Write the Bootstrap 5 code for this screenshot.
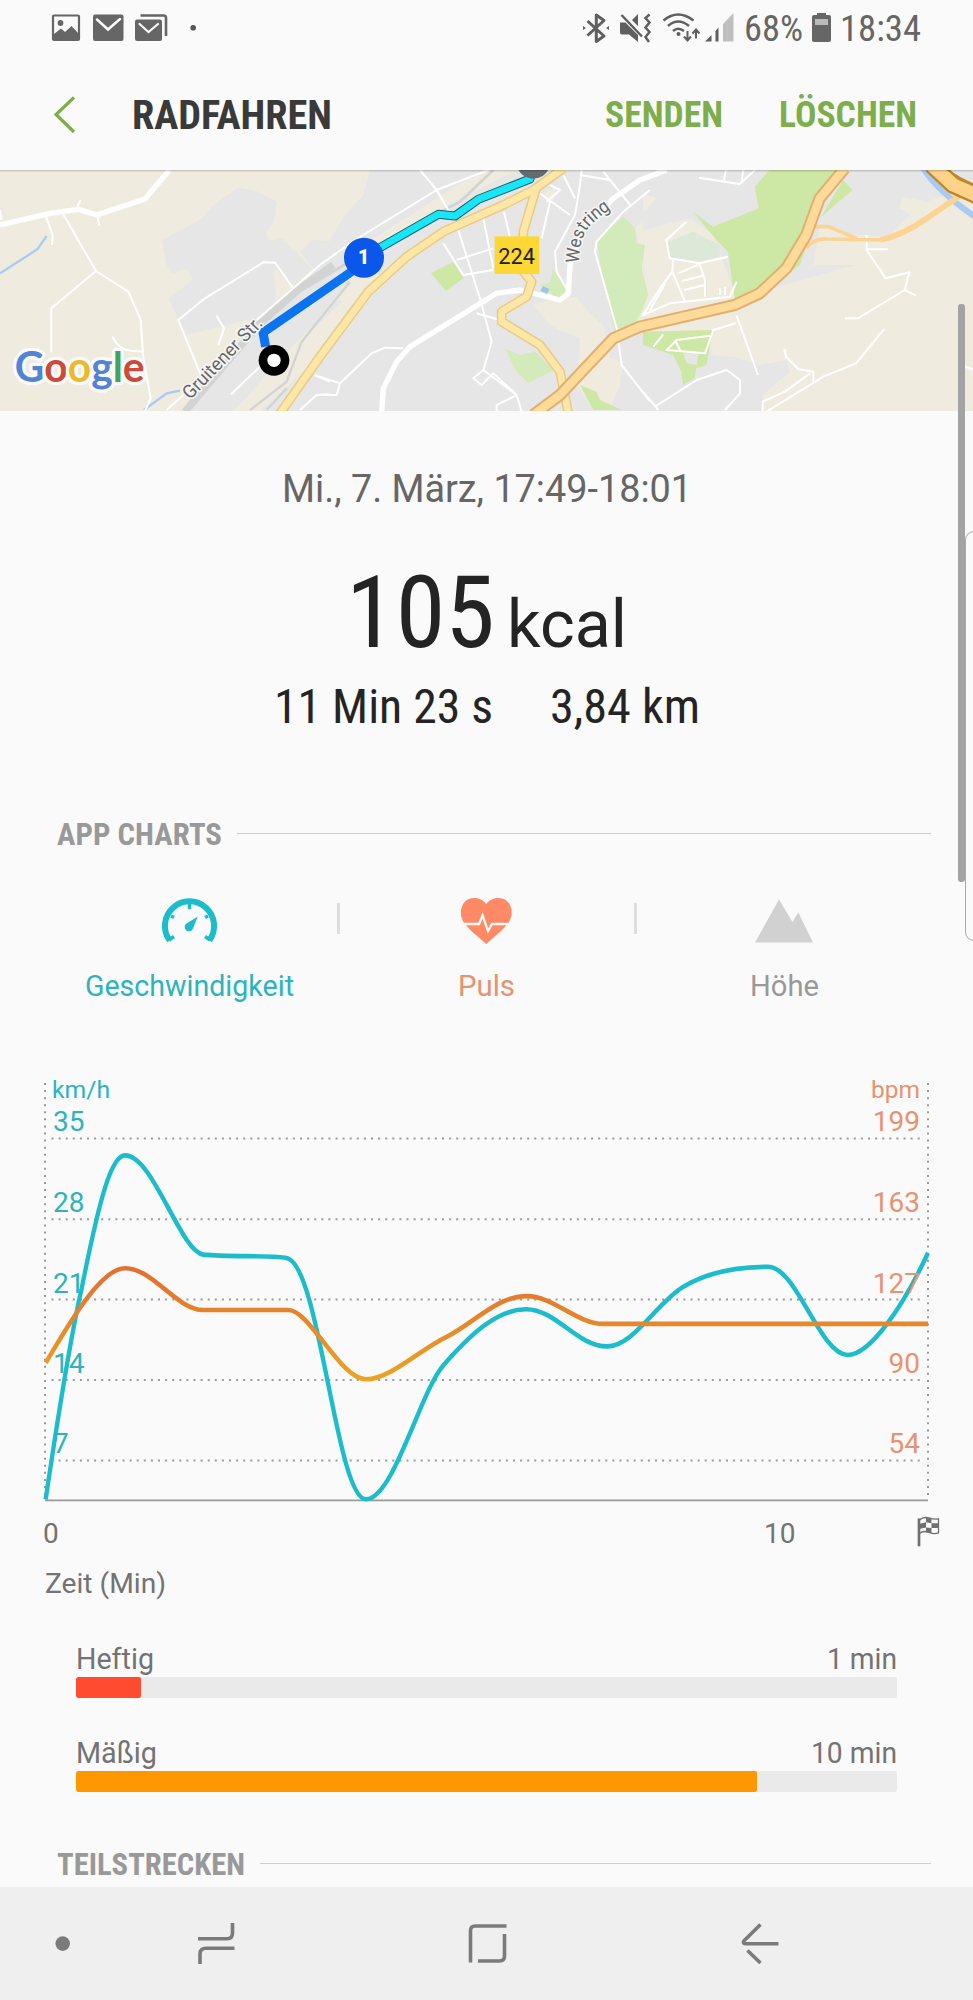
<!doctype html>
<html lang="de">
    <head>
        <meta charset="UTF-8" />
        <meta name="viewport" content="width=device-width, initial-scale=1.0" />
        <title>Radfahren</title>
        <link
            href="https://cdn.jsdelivr.net/npm/bootstrap@5.3.0/dist/css/bootstrap.min.css"
            rel="stylesheet"
        />
        <style>
            body {
                background: #fafafa;
                color: #242424;
                font-family: Roboto, sans-serif;
                height: 2000px;
                overflow: hidden;
            }
            svg {
                display: block;
                flex-shrink: 0;
            }
            svg text {
                font-family: Roboto, sans-serif;
            }
            svg .logo-text {
                font-family: Lato, sans-serif;
                font-weight: 700;
            }
            .cond {
                font-family: "Roboto Condensed", Roboto, sans-serif;
                font-stretch: condensed;
            }
            .fit {
                display: block;
                white-space: nowrap;
                flex-shrink: 0;
            }
            .fit > span {
                display: inline-block;
                transform-origin: 0 50%;
            }
            .status-bar {
                height: 58px;
                padding-right: 52px;
                font-size: 36px;
                line-height: 58px;
                color: #666;
            }
            .app-bar {
                height: 112px;
                padding: 2px 56px 0 54px;
                line-height: 60px;
            }
            .app-title {
                font-size: 40.7px;
                color: #3a3a3a;
                margin-left: 56px;
            }
            .app-action {
                font-size: 36px;
                color: #7dae4b;
            }
            .app-actions {
                gap: 56px;
            }
            .summary {
                padding-top: 52.5px;
            }
            .date-line {
                font-size: 38.5px;
                line-height: 50px;
                color: #666;
            }
            .calories {
                margin-top: 49px;
                height: 100px;
                line-height: 100px;
                font-size: 100px;
                gap: 12px;
            }
            .calories .unit {
                font-size: 67px;
            }
            .totals {
                margin-top: 19.3px;
                font-size: 47.4px;
                line-height: 50px;
                gap: 57px;
            }
            .section-head {
                margin-top: 85.6px;
                padding: 0 42.5px 0 57px;
                gap: 15px;
                font-size: 31px;
                line-height: 36px;
                color: #999;
            }
            .section-head.splits {
                margin-top: 54.9px;
            }
            .rule {
                height: 1.5px;
                background: #cfcfcf;
                margin-bottom: 4px;
            }
            .metrics {
                margin-top: 43.6px;
                padding: 0 41.5px 0 42px;
                font-size: 29px;
                line-height: 36px;
            }
            .metric {
                height: 107px;
            }
            .metric svg {
                margin-bottom: 23px;
            }
            .divider {
                width: 3px;
                height: 31px;
                margin-top: 6px;
                background: #dedede;
            }
            .speed {
                color: #2eb3bd;
            }
            .pulse {
                color: #e79270;
            }
            .height {
                color: #999;
            }
            .chart {
                margin-top: 56px;
            }
            .zones {
                margin-top: 36px;
                padding: 0 76px 0 75.5px;
                font-size: 29px;
                line-height: 36px;
                color: #737373;
            }
            .zone + .zone {
                margin-top: 37.5px;
            }
            .zone .progress {
                --bs-progress-height: 21px;
                --bs-progress-bg: #eaeaea;
                --bs-progress-border-radius: 2px;
            }
            .zone .progress-bar {
                border-radius: 2px;
            }
            .bg-hard {
                background: #ff4c30;
            }
            .bg-moderate {
                background: #ff9800;
            }
            .nav-keys {
                margin-top: 3.2px;
                height: 114px;
                background: #efefef;
            }
            .scroll-thumb {
                position: absolute;
                left: 958px;
                top: 304px;
                width: 7px;
                height: 578px;
                border-radius: 3px;
                background: #a3a3a3;
            }
            .edge-handle {
                position: absolute;
                left: 965px;
                top: 531px;
                width: 20px;
                height: 410px;
                border: 1px solid #a8a8a8;
                border-radius: 9px;
            }
        </style>
    </head>
    <body class="position-relative">
        <!-- Status bar -->
        <div class="status-bar d-flex justify-content-between">
            <svg width="210" height="58" viewBox="0 0 210 58">
                <rect x="53" y="15.500" width="26" height="24.500" rx="1" fill="none" stroke="#666" stroke-width="2.200" />
                <circle cx="60.500" cy="23" r="2.900" fill="#666" />
                <path d="M54 34 61 28.500 65 32 71.500 26 78 33V40H54Z" fill="#666" />
                <rect x="93" y="14.500" width="30.500" height="26.500" rx="2" fill="#666" />
                <path d="M97 19.500 108 29.500 120 19" fill="none" stroke="#fafafa" stroke-width="2.500" stroke-linecap="round" />
                <path d="M140.500 15.500H164Q166 15.500 166 18V36" fill="none" stroke="#666" stroke-width="2.600" />
                <rect x="135" y="19.500" width="27" height="21.500" rx="2" fill="#666" />
                <path d="M139.500 24 148.500 32 158 24" fill="none" stroke="#fafafa" stroke-width="2.200" stroke-linecap="round" />
                <circle cx="193.200" cy="27.700" r="2.800" fill="#555" />
            </svg>
            <div class="d-flex">
                <svg width="164" height="58" viewBox="580 0 164 58" fill="none" stroke="#5f5f5f" stroke-width="2.500">
                    <path d="M587.500 21 604 36 596.300 41.500V15L604 20.500 587.500 35.500" stroke-width="3" stroke-linejoin="round" />
                    <path d="M583 26 586 28 583 30ZM609 26 606 28 609 30Z" fill="#5f5f5f" stroke="none" />
                    <path d="M620 22.500H625.500L638 35V42L629 34.500H622Q620 34.500 620 32ZM638 14V26L632 20Z" fill="#5f5f5f" stroke="none" />
                    <path d="M621.500 15 642 36.500" />
                    <path d="M649.500 14.500 645.500 18 649.500 22.500 645.500 27.500 649.500 32 645.500 37 649 42" />
                    <path d="M663.500 20.500Q678 8.500 693.500 20.500M668 26Q678 17 689 26M673 31Q678 26.500 684 31" />
                    <circle cx="678.500" cy="34" r="2" fill="#5f5f5f" stroke="none" />
                    <path d="M687.500 31V40M684 36.500 687.500 40.500 691 36.500M696 38.500V30M692.500 33.500 696 29.500 699.500 33.500" stroke-width="2" />
                    <path d="M705 41.500 711.500 35V41.500ZM715.500 31 718.500 27.500V41.500H715.500Z" fill="#5f5f5f" stroke="none" />
                    <path d="M723 24 733.500 13V41.500H723Z" fill="#bfbfbf" stroke="none" />
                </svg>
                <span class="fit cond" data-width="59"><span>68%</span></span>
                <svg width="37" height="58" viewBox="803 0 37 58">
                    <path d="M812 17Q812 15 814 15H817V13H826V15H829Q831 15 831 17V40Q831 42 829 42H814Q812 42 812 40Z" fill="#666" />
                    <rect x="815" y="19" width="13" height="6" fill="#bbb" />
                </svg>
                <span class="fit cond" data-width="81"><span>18:34</span></span>
            </div>
        </div>

        <!-- App bar -->
        <header class="app-bar cond fw-bold d-flex align-items-center">
            <svg width="22" height="40" viewBox="54 94 22 40">
                <path d="M74 96.500 56 113.500 74 131" fill="none" stroke="#7dae4b" stroke-width="3.200" />
            </svg>
            <span class="app-title fit" data-width="200"><span>RADFAHREN</span></span>
            <div class="app-actions d-flex ms-auto">
                <span class="app-action fit" data-width="118"><span>SENDEN</span></span>
                <span class="app-action fit" data-width="138"><span>LÖSCHEN</span></span>
            </div>
        </header>

        <!-- Route map -->
        <svg width="973" height="241" viewBox="0 170 973 241" stroke-linejoin="round">
            <rect y="170" width="973" height="241" fill="#efebdf" />
            <g transform="translate(0 165) scale(.33333)">
                <!-- built-up areas -->
                <g fill="#e6e6e6">
                    <path d="M485 225 600 165 640 120 715 68 770 78 830 110 822 170 797 205 812 228 845 220 935 310 880 370 770 480 740 465 560 510 505 400 578 345 560 310 520 325 500 300ZM900 260 937 224 990 228V290L940 315Z" />
                    <path d="M1110 15 1090 90 1035 150 990 225 930 330 880 400 700 560 540 740 720 740 950 480 1040 400 1060 410 920 610 780 740H3000V15Z" />
                </g>
                <g fill="#efebdf">
                    <path d="M1100 235 1310 100 1370 60 1470 15H1550L1370 105 1110 265ZM1060 330 1140 305 1130 370 1060 415 1010 405ZM700 740 860 560 940 480 880 580 740 740Z" />
                    <path d="M1600 420 1660 400 1730 395 1765 440 1810 480 1830 580 1870 590 1860 660 1830 735 1770 720 1730 660 1740 520 1690 500 1650 480ZM1905 190 1929 170V450L1935 350 1915 240ZM1630 85 1670 65 1660 110Z" />
                    <path d="M1929 195 2070 160 2140 210 2210 400 2990 180V740H2289V690L2369 620 2359 585 2279 600 2199 575 2139 570 2119 500 1929 500 1900 430 1935 380Z" />
                    <path d="M2929 60 2990 90V300H2440L2460 185 2560 210 2670 212 2700 180 2730 150 2697 125 2710 95 2780 110Z" />
                    <path d="M1929 85 1970 100 1929 145ZM820 305 880 368 830 420Z" />
                </g>
                <!-- parks and water -->
                <g fill="#cde7a5">
                    <path d="M1293 325 1360 290 1390 340 1338 378ZM1740 660 1790 680 1800 705 1865 735H1780ZM2309 15H2530L2459 120 2400 300 2289 385 2204 400 2184 260 2154 230 2079 140 2139 185 2276 130 2264 65ZM2529 45 2557 75 2464 155Z" />
                    <path d="M1929 500 2139 495 2119 600 2089 610 2084 640 2049 660 2044 620 2019 570 1929 540ZM2050 565 2060 595 2090 600 2095 565Z" fill-rule="evenodd" />
                    <path d="M1515 552 1560 570 1605 560 1660 615 1585 655 1550 620ZM1790 225 1870 155 1905 190 1910 235 1935 240 1925 310 1945 390 1920 450 1900 480 1845 500 1810 350ZM1620 360 1650 350 1660 310 1705 380 1680 405Z" fill="#d3eaba" />
                    <path d="M2004 230 2079 200 2159 240V275L2089 290 2009 280Z" fill="#dce9d8" />
                </g>
                <path d="M0 325 112 253 140 213M432 735 500 685 540 677" fill="none" stroke="#a9cbf2" stroke-width="7" />
                <path d="M2769 10Q2820 85 2925 155" fill="none" stroke="#a9cbf2" stroke-width="18" />
                <path d="M1625 370 1645 380" stroke="#9dc5ea" stroke-width="16" />
                <!-- railway -->
                <g fill="none" stroke="#d2d3d3">
                    <path d="M555 740 775 480 900 370 1000 300" stroke-width="22" />
                    <path d="M880 390 1100 260 1380 110 1480 15" stroke-width="8" />
                    <path d="M750 735 860 650 905 530 1050 350M800 735 860 670" stroke-width="7" />
                </g>
                <!-- side streets -->
                <g fill="none" stroke="#fff" stroke-width="6">
                    <path d="M188 145 288 318 385 380 422 465 430 580 452 700 435 738M288 318 154 430V562M138 155 158 210 156 240M232 125 242 105M292 150 298 182M338 515Q355 555 395 557L428 560M600 625 535 465 615 400 790 292 825 293 880 370M650 452 672 490 655 540M693 688 780 605M500 735 550 690M945 630 990 650M900 735 950 690 990 688M0 135 4 165" />
                    <path d="M770 465 960 300 1060 228 1310 75 1465 15M1260 15 1310 75 1370 180 1440 400 1475 530 1450 615 1420 640 1445 660 1480 625 1550 690 1565 740M1330 235 1390 330 1480 315M1450 160 1480 310M1512 140 1540 260M1370 285 1480 250M960 635 1020 655 1010 690 960 690M1020 655 1115 565 1155 548 1210 550M1430 445 1500 465M1450 615 1550 690 1490 720V740M1620 85 1710 150M1650 60 1680 75 1640 110M1690 30 1725 100M1745 15 1740 60 1725 150M1650 110 1625 220M1740 30 1830 45M1725 150 1665 260 1670 320 1705 380M1950 75 1870 140 1790 230 1785 260 1850 490 1865 600 1950 710M1810 20 1890 120" />
                    <path d="M2059 170 1999 225 2009 280 2099 295 2184 275M2019 285 2017 320 2055 410 2190 395 2210 350M2035 325 2099 297 2115 345V395M2045 348 2110 332M2052 375 2115 360M2017 320 1980 370 1929 450 2010 415 2190 395M1995 355 1950 435M2160 370V390M2175 365V390M2209 450 2274 630M2207 475 2140 495 2115 565 2000 555 2030 525 2130 512M2025 525 2040 555M1960 545 1990 508M1929 680 1975 735M1965 725 2090 645 2180 615 2220 645V685L2175 735" />
                    <path d="M2097 38 2219 57 2265 15M2225 50 2230 15M2172 45 2178 15M2600 210V255L2657 340 2728 322 2714 375 2574 460H2535M2600 253H2663M2714 375 2748 392M2653 492 2568 595 2470 635 2300 740M2353 552 2358 575 2395 612 2440 620V655M2430 625 2355 680 2288 710V740M2895 605 2925 615" />
                </g>
                <path d="M0 180 150 145 235 133 290 150 435 102 508 15" fill="none" stroke="#fff" stroke-width="16" />
                <path d="M1145 740 1150 670 1190 590 1230 545 1490 385 1560 375 1680 405 1705 385 1710 300 1750 190 1840 100 1920 45 2000 15" fill="none" stroke="#fff" stroke-width="16" />
                <!-- main roads -->
                <g fill="none">
                    <path d="M840 745 960 575 1105 380 1220 275 1330 200 1510 120 1600 75 1690 10M1610 65 1570 200V320L1595 350 1580 395 1505 440V470L1620 540 1680 620 1705 745" stroke="#e8cc86" stroke-width="29" />
                    <path d="M840 745 960 575 1105 380 1220 275 1330 200 1510 120 1600 75 1690 10M1610 65 1570 200V320L1595 350 1580 395 1505 440V470L1620 540 1680 620 1705 745" stroke="#fee7a6" stroke-width="20" />
                    <path d="M2419 250Q2440 220 2480 222L2640 225Q2710 210 2780 160L2890 85M2440 185H2485L2570 220" stroke="#fbd493" stroke-width="11" />
                    <path d="M2640 225Q2710 210 2780 160L2890 85" stroke="#fbd493" stroke-width="17" />
                    <path d="M1600 750 1680 690 1840 520 1920 485 2204 420 2279 385 2359 310 2419 210 2459 100 2534 10" stroke="#e1b071" stroke-width="37" />
                    <path d="M1600 750 1680 690 1840 520 1920 485 2204 420 2279 385 2359 310 2419 210 2459 100 2534 10" stroke="#ffda98" stroke-width="25" />
                    <path d="M2795 0 2860 60 2940 95" stroke="#bf8628" stroke-width="54" />
                    <path d="M2795 0 2860 60 2940 95" stroke="#ffd28a" stroke-width="40" />
                    <path d="M2830 5Q2880 45 2940 65" stroke="#bf8628" stroke-width="5" />
                </g>
                <!-- recorded track -->
                <path d="M797 545 789 503 1095 292" fill="none" stroke="#0a73f0" stroke-width="27" />
                <g fill="none" stroke-linecap="round">
                    <path d="M1110 265 1315 148 1365 153 1435 103 1590 42" stroke="#17606c" stroke-width="27" />
                    <path d="M1110 265 1315 148 1365 153 1435 103 1590 42" stroke="#17e6f7" stroke-width="21" />
                </g>
                <circle cx="1600" cy="-10" r="51" fill="#666b6e" />
                <circle cx="1092" cy="278" r="60" fill="#0b57ea" />
                <circle cx="822" cy="586" r="46" fill="#000" />
                <circle cx="822" cy="586" r="20" fill="#fff" />
                <text x="1074" y="298" font-size="58" font-weight="900" fill="#fff">1</text>
                <rect x="1484" y="214" width="134" height="113" fill="#fdd835" />
                <text x="1495" y="298" font-size="68" textLength="110" lengthAdjust="spacingAndGlyphs" fill="#222">224</text>
                <g fill="#666" stroke="#f5f5f5" stroke-width="10" paint-order="stroke" font-size="56">
                    <text transform="translate(570 706) rotate(-46)" textLength="318" lengthAdjust="spacingAndGlyphs">Gruitener Str.</text>
                    <path id="westring" d="M1737 295Q1739 230 1757 200T1842 125" fill="none" stroke="none" />
                    <text><textPath href="#westring" textLength="200" lengthAdjust="spacingAndGlyphs">Westring</textPath></text>
                </g>
                <text class="logo-text" x="44" y="652" font-size="126" textLength="390" lengthAdjust="spacingAndGlyphs" stroke="#fafafa" stroke-width="20" paint-order="stroke"><tspan fill="#5383d3">G</tspan><tspan fill="#cc4a3c">o</tspan><tspan fill="#ecb92a">o</tspan><tspan fill="#5383d3">g</tspan><tspan fill="#43a35b">l</tspan><tspan fill="#cc4a3c">e</tspan></text>
            </g>
            <rect y="170" width="973" height="1.500" fill="#000" opacity=".16" />
        </svg>

        <!-- Workout summary -->
        <section class="summary">
            <div class="date-line d-flex justify-content-center">
                <span class="fit" data-width="410"><span>Mi., 7. März, 17:49-18:01</span></span>
            </div>
            <div class="calories d-flex justify-content-center align-items-baseline">
                <span class="fit cond" data-width="149"><span>105</span></span>
                <span class="fit unit" data-width="120"><span>kcal</span></span>
            </div>
            <div class="totals cond d-flex justify-content-center">
                <span class="fit" data-width="219"><span>11 Min 23 s</span></span>
                <span class="fit" data-width="150"><span>3,84 km</span></span>
            </div>
        </section>

        <div class="section-head cond fw-bold d-flex align-items-center">
            <span class="fit" data-width="165"><span>APP CHARTS</span></span>
            <div class="rule flex-grow-1"></div>
        </div>

        <div class="metrics d-flex">
            <div class="metric speed d-flex flex-column align-items-center flex-fill w-100">
                <svg width="60" height="48" viewBox="159 897 60 48">
                    <path d="M169.700 940.500A24.600 24.600 0 1 1 209.300 940.500" fill="none" stroke="#1cbccb" stroke-width="6" />
                    <path d="M189.500 903V909M171 916 174 917.500M208 916 205 917.500M169 940 174 936.500M210 940 205 936.500" stroke="#1cbccb" stroke-width="3.400" />
                    <path d="M197.800 916.500 193 928.500A4.300 4.300 0 1 1 186.500 923.500Z" fill="#1cbccb" />
                </svg>
                <span class="fit" data-width="209"><span>Geschwindigkeit</span></span>
            </div>
            <div class="divider flex-shrink-0"></div>
            <div class="metric pulse d-flex flex-column align-items-center flex-fill w-100">
                <svg width="60" height="48" viewBox="456.500 897 60 48">
                    <path d="M485.700 904C480 896.500 470 896.500 465 901C459 906.500 459 917 464 923.500C470 931 479 938 485.700 944C492.500 938 501.500 931 507.500 923.500C512.500 917 512.500 906.500 506.500 901C501.500 896.500 491.500 896.500 485.700 904Z" fill="#ff8a65" />
                    <path d="M461 924H478.500L482 915.500 487.500 931 491.500 924H512" fill="none" stroke="#fafafa" stroke-width="2.300" />
                </svg>
                <span class="fit" data-width="57"><span>Puls</span></span>
            </div>
            <div class="divider flex-shrink-0"></div>
            <div class="metric height d-flex flex-column align-items-center flex-fill w-100">
                <svg width="60" height="48" viewBox="753.500 897 60 48">
                    <path d="M754.500 942.500 778.500 899.500 792 922 797.800 912.500 812.500 942.500Z" fill="#d1d1d1" />
                </svg>
                <span class="fit" data-width="69"><span>Höhe</span></span>
            </div>
        </div>

        <!-- Speed and heart rate over time -->
        <svg class="chart" width="973" height="545" viewBox="0 1060 973 545" fill="none">
            <defs>
                <linearGradient id="heat" gradientUnits="userSpaceOnUse" x1="0" y1="583" x2="0" y2="894">
                    <stop offset="0" stop-color="#e36f31" />
                    <stop offset=".5" stop-color="#e5882c" />
                    <stop offset="1" stop-color="#eaa423" />
                </linearGradient>
            </defs>
            <g stroke="#9a9a9a" stroke-width="2">
                <path d="M51.500 1138.600H920M51.500 1219.300H920M51.500 1299.600H920M51.500 1380H920M51.500 1460.400H920" stroke-dasharray="2 5.100" />
                <path d="M45 1083V1499M928 1083V1499" stroke-dasharray="2 5.070" />
            </g>
            <path d="M45 1500.300H928" stroke="#999" stroke-width="1.800" />
            <g transform="translate(0 1060) scale(.33333 .35714)" stroke-width="13">
                <path d="M137 1230C180 960 220 740 245 640C300 380 335 267 375 267C460 267 540 535 610 545C690 553 840 545 865 556C960 590 1010 1230 1098 1230C1180 1230 1260 930 1330 855C1410 770 1490 698 1578 698C1670 698 1730 802 1821 802C1900 802 1970 680 2050 635C2130 590 2220 579 2305 579C2390 579 2460 826 2543 826C2610 826 2710 690 2784 540" stroke="#1cbccb" />
                <path d="M137 848C200 750 300 583 375 583C460 583 530 700 610 700L865 700C930 700 1020 894 1098 894C1170 894 1260 810 1340 775C1420 738 1490 661 1580 661C1660 661 1730 739 1811 739L2784 739" stroke="url(#heat)" />
            </g>
            <g fill="#2eb3bd" font-size="28">
                <text x="52" y="1097.900" font-size="24.500" textLength="58" lengthAdjust="spacingAndGlyphs">km/h</text>
                <text x="53" y="1131">35</text>
                <text x="53" y="1211.800">28</text>
                <text x="53" y="1292.500">21</text>
                <text x="53" y="1372.900">14</text>
                <text x="53" y="1453">7</text>
            </g>
            <g fill="#e79270" font-size="28" text-anchor="end">
                <text x="920" y="1097.900" font-size="24.500" textLength="49" lengthAdjust="spacingAndGlyphs">bpm</text>
                <text x="920" y="1131">199</text>
                <text x="920" y="1211.800">163</text>
                <text x="920" y="1292.500">127</text>
                <text x="920" y="1372.900">90</text>
                <text x="920" y="1453">54</text>
            </g>
            <g fill="#737373" font-size="28">
                <text x="43" y="1542.500">0</text>
                <text x="764" y="1542.500">10</text>
                <text x="45" y="1593.200" font-size="28.500" textLength="121" lengthAdjust="spacingAndGlyphs">Zeit (Min)</text>
            </g>
            <!-- finish flag -->
            <g transform="translate(0 -75.700) scale(1 1.071)">
                <path d="M919 1488.500V1514.500" stroke="#6f6f6f" stroke-width="2.700" />
                <path d="M919 1490Q924 1486.500 929 1488T938.500 1489V1502Q934 1503.500 929 1501.500T919 1502.500Z" stroke="#6f6f6f" stroke-width="1.300" />
                <path d="M926 1488 931.500 1488.500V1493L926 1492ZM920 1493.500 926 1492V1497L920 1498ZM931.500 1493 938 1493V1497.500L931.500 1497.500ZM926 1497 931.500 1497.500V1502L926 1501.500Z" fill="#6f6f6f" />
            </g>
        </svg>

        <!-- Heart rate zones -->
        <section class="zones">
            <div class="zone">
                <div class="d-flex justify-content-between">
                    <span class="fit" data-width="78"><span>Heftig</span></span>
                    <span class="fit" data-width="70"><span>1 min</span></span>
                </div>
                <div class="progress">
                    <div class="progress-bar bg-hard" style="width: 8%"></div>
                </div>
            </div>
            <div class="zone">
                <div class="d-flex justify-content-between">
                    <span class="fit" data-width="81"><span>Mäßig</span></span>
                    <span class="fit" data-width="86"><span>10 min</span></span>
                </div>
                <div class="progress">
                    <div class="progress-bar bg-moderate" style="width: 83%"></div>
                </div>
            </div>
        </section>

        <div class="section-head splits cond fw-bold d-flex align-items-center">
            <span class="fit" data-width="188"><span>TEILSTRECKEN</span></span>
            <div class="rule flex-grow-1"></div>
        </div>

        <!-- System navigation -->
        <nav class="nav-keys">
            <svg width="973" height="113" viewBox="0 1887 973 113" fill="none" stroke="#7b7b7b" stroke-width="3.600">
                <circle cx="62.700" cy="1943.600" r="7.300" fill="#7b7b7b" stroke="none" />
                <path d="M198 1938.700H227Q232.500 1938.700 232.500 1933V1923M234.500 1948.300H206Q200 1948.300 200 1954V1964" />
                <path d="M506.500 1926H475Q470.500 1926 470.500 1931V1962.500M504.500 1934V1956Q504.500 1961 499.500 1961H478" />
                <path d="M760.500 1924.500 743.800 1941Q742.500 1943.700 746 1943.700H778.500M747.500 1950.500 760.500 1963" />
            </svg>
        </nav>

        <div class="edge-handle"></div>
        <div class="scroll-thumb"></div>

        <script src="https://cdn.jsdelivr.net/npm/bootstrap@5.3.0/dist/js/bootstrap.bundle.min.js"></script>
        <script>
            // Squeeze each label to the width given in data-width
            document.querySelectorAll(".fit").forEach((el) => {
                const label = el.firstElementChild;
                const width = Number(el.dataset.width);
                const natural = label.getBoundingClientRect().width;
                label.style.transform = `scaleX(${width / natural})`;
                el.style.width = width + "px";
            });
        </script>
    </body>
</html>
